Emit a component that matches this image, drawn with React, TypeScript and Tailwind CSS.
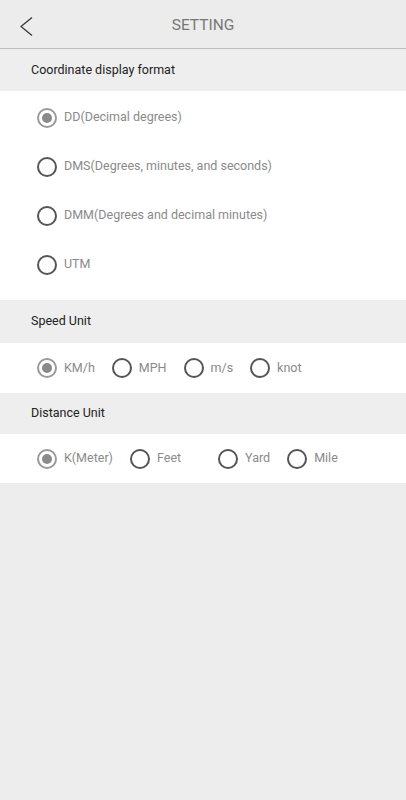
import { useState } from 'react';

function Radio({ checked }: { checked: boolean }) {
  return checked ? (
    <span className="flex h-5 w-5 shrink-0 items-center justify-center rounded-full border-2 border-[#9a9a9a]">
      <span className="h-[10px] w-[10px] rounded-full bg-[#8a8a8a]" />
    </span>
  ) : (
    <span className="h-5 w-5 shrink-0 rounded-full border-2 border-[#555]" />
  );
}

function Option({ label, checked, onClick, className = '' }: { label: string; checked: boolean; onClick: () => void; className?: string }) {
  return (
    <button onClick={onClick} className={`flex items-center gap-[7px] text-[12.5px] text-[#8a8a8a] ${className}`}>
      <Radio checked={checked} />
      <span>{label}</span>
    </button>
  );
}

function SectionTitle({ children, className = '' }: { children: React.ReactNode; className?: string }) {
  return (
    <div className={`flex items-center bg-[#eeeeee] pl-[31px] text-[12.5px] text-[#222] ${className}`}>{children}</div>
  );
}

export default function App() {
  const [coord, setCoord] = useState('DD');
  const [speed, setSpeed] = useState('KM/h');
  const [dist, setDist] = useState('K(Meter)');

  const coords = [
    { key: 'DD', label: 'DD(Decimal degrees)' },
    { key: 'DMS', label: 'DMS(Degrees, minutes, and seconds)' },
    { key: 'DMM', label: 'DMM(Degrees and decimal minutes)' },
    { key: 'UTM', label: 'UTM' },
  ];

  return (
    <div className="min-h-[800px] w-full bg-[#ededed]" style={{ fontFamily: 'Roboto, "Liberation Sans", sans-serif' }}>
      {/* Top bar */}
      <div className="relative flex h-[49px] items-center justify-center border-b border-[#bdbdbd] bg-[#ececec]">
        <button className="absolute left-[17px] top-[14px] p-[2px]">
          <svg width="16" height="22" viewBox="0 0 16 22" fill="none">
            <path d="M13 1.5 L2 10.5 L13 19.5" stroke="#333" strokeWidth="1.2" />
          </svg>
        </button>
        <span className="pt-[4px] text-[15.5px] text-[#777]">SETTING</span>
      </div>

      <SectionTitle className="h-[42px]">Coordinate display format</SectionTitle>
      <div className="bg-white pt-[2px] pb-[11px]">
        {coords.map((c) => (
          <div key={c.key} className="flex h-[49px] items-center pl-[37px]">
            <Option label={c.label} checked={coord === c.key} onClick={() => setCoord(c.key)} />
          </div>
        ))}
      </div>

      <SectionTitle className="h-[43px]">Speed Unit</SectionTitle>
      <div className="flex h-[50px] items-center gap-[17px] bg-white pl-[37px]">
        {['KM/h', 'MPH', 'm/s', 'knot'].map((s) => (
          <Option key={s} label={s} checked={speed === s} onClick={() => setSpeed(s)} />
        ))}
      </div>

      <SectionTitle className="h-[41px]">Distance Unit</SectionTitle>
      <div className="flex h-[49px] items-center gap-[17px] bg-white pl-[37px]">
        {['K(Meter)', 'Feet', 'Yard', 'Mile'].map((d) => (
          <Option key={d} label={d} checked={dist === d} onClick={() => setDist(d)} className={d === 'Feet' ? 'mr-[20px]' : ''} />
        ))}
      </div>
    </div>
  );
}
